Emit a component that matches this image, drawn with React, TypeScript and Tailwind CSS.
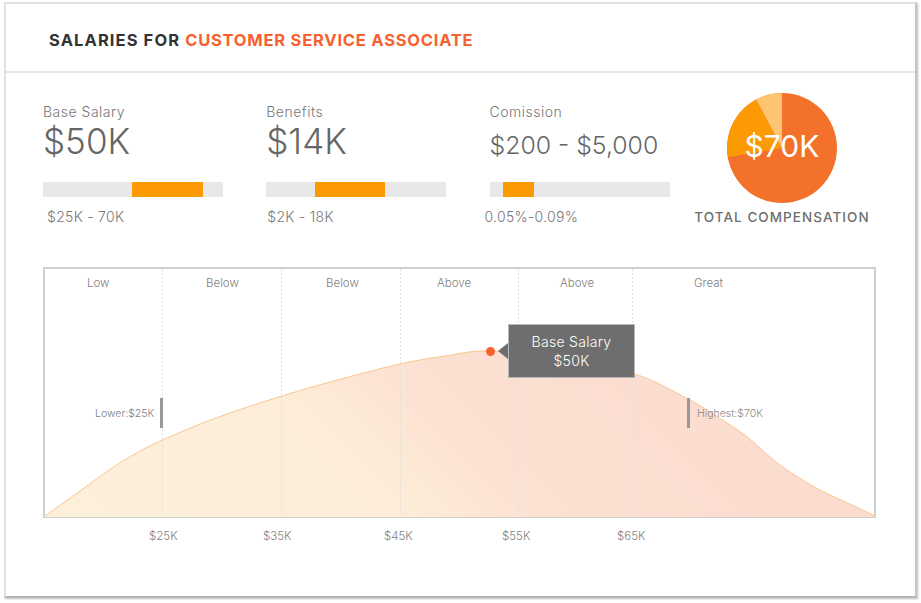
const stats = [
	{ label: 'Base Salary', value: '$50K', range: '$25K - 70K', fill: 'ml-[89px] w-[71px]', rangeStyle: 'ml-1', valueStyle: 'text-[35px] leading-[38px]' },
	{ label: 'Benefits', value: '$14K', range: '$2K - 18K', fill: 'ml-[49px] w-[70px]', rangeStyle: 'ml-px', valueStyle: 'text-[35px] leading-[38px]' },
	{ label: 'Comission', value: '$200 - $5,000', range: '0.05%-0.09%', fill: 'ml-[13px] w-[31px]', rangeStyle: '-ml-[5px]', valueStyle: 'text-[24.800px] leading-[46px]' },
];

const bands = [
	{ text: 'Low', cls: 'left-[42px]' },
	{ text: 'Below', cls: 'left-[161px]' },
	{ text: 'Below', cls: 'left-[281px]' },
	{ text: 'Above', cls: 'left-[392px]' },
	{ text: 'Above', cls: 'left-[515px]' },
	{ text: 'Great', cls: 'left-[649px]' },
];

const ticks = [
	{ text: '$25K', cls: 'left-[106px]' },
	{ text: '$35K', cls: 'left-[220px]' },
	{ text: '$45K', cls: 'left-[341px]' },
	{ text: '$55K', cls: 'left-[459px]' },
	{ text: '$65K', cls: 'left-[574px]' },
];

const grid = [117.5, 236.5, 355.5, 473.5, 587.5];

const points: [number, number][] = [
	[0, 247], [35, 222], [70, 197], [100, 179.5], [130, 165.5], [175, 147.5], [237, 127], [296, 110], [355, 95],
	[400, 87], [445, 82], [520, 90], [590, 105], [643, 130], [672, 147.5], [701, 167], [725, 188], [745, 203],
	[775, 221], [805, 235], [830, 247],
];

// catmull-rom through the sampled points
const curveD = points.reduce((d, p, i) => {
	if (i === 0) return `M${p[0]} ${p[1]}`;
	const p0 = points[Math.max(i - 2, 0)];
	const p1 = points[i - 1];
	const p3 = points[Math.min(i + 1, points.length - 1)];
	const c1 = [p1[0] + (p[0] - p0[0]) / 6, p1[1] + (p[1] - p0[1]) / 6];
	const c2 = [p[0] - (p3[0] - p1[0]) / 6, p[1] - (p3[1] - p1[1]) / 6];
	return `${d} C${c1[0]} ${c1[1]} ${c2[0]} ${c2[1]} ${p[0]} ${p[1]}`;
}, '');

const Pie = () => (
	<svg width="110" height="110" viewBox="0 0 110 110">
		<circle cx="55" cy="55" r="55" fill="#f4712b" />
		<path d="M55 55 L0.8 64.3 A55 55 0 0 1 29.3 6.4 Z" fill="#fb9a03" />
		<path d="M55 55 L29.3 6.4 A55 55 0 0 1 55 0 Z" fill="#fdc572" />
	</svg>
);

const Curve = () => (
	<svg className="absolute left-0 top-0" width="830" height="248" viewBox="0 0 830 248">
		<defs>
			<linearGradient id="area" x1="0" y1="0.6" x2="1" y2="0.4">
				<stop offset="0" stopColor="#fdf0db" />
				<stop offset="0.36" stopColor="#fcecd8" />
				<stop offset="0.47" stopColor="#fde3d3" />
				<stop offset="0.6" stopColor="#fbdfd1" />
				<stop offset="1" stopColor="#fbdccf" />
			</linearGradient>
		</defs>
		<path d={`${curveD} L830 248 L0 248 Z`} fill="url(#area)" />
		<path d={curveD} fill="none" stroke="#fcc68b" strokeWidth="1" />
		<g stroke="#e0e0e0" strokeWidth="1" strokeDasharray="2 2">
			{grid.map((x) => (
				<line key={x} x1={x} y1="0" x2={x} y2="248" />
			))}
		</g>
	</svg>
);

const App = () => {
	return (
		<div className="w-[921px] h-[603px] bg-white pl-1 pt-[2px] font-['Inter',sans-serif]">
			<div className="w-[913px] h-[596px] bg-white border-2 border-[#e2e2e2] border-r-[#c4c4c4] border-b-[#b5b5b5] shadow-[1px_1px_2px_rgba(0,0,0,0.25)]">
				{/* Header */}
				<div className="h-[69px] border-b-2 border-[#e6e6e6] pl-[43px] pt-[24px]">
					<h1 className="text-[16.500px] leading-6 font-bold tracking-[1.1px] text-[#333333]">
						SALARIES FOR <span className="tracking-[0.78px] text-[#f7612f]">CUSTOMER SERVICE ASSOCIATE</span>
					</h1>
				</div>

				{/* Stats row */}
				<div className="flex gap-[43.250px] pl-[37px] pt-[20px] h-[194px]">
					{stats.map((s) => (
						<div key={s.label} className="w-[180px] pt-[9px]">
							<div className="text-[14px] leading-5 tracking-[0.5px] text-[#777777] font-light">{s.label}</div>
							<div className={`h-[44px] font-light text-[#666666] ${s.valueStyle}`}>{s.value}</div>
							<div className="h-[15px] mt-[16px] bg-[#e8e8e8]">
								<div className={`h-full bg-[#fb9a03] ${s.fill}`} />
							</div>
							<div className={`mt-[10px] text-[14px] leading-5 tracking-[0.3px] text-[#777777] font-light ${s.rangeStyle}`}>{s.range}</div>
						</div>
					))}
					<div className="flex flex-col items-center w-[176px] -ml-[18.750px]">
						<div className="relative w-[110px] h-[110px]">
							<Pie />
							<span className="absolute inset-0 flex items-center justify-center pb-1 text-[30px] text-white">$70K</span>
						</div>
						<div className="mt-[4px] text-[13.500px] leading-5 tracking-[1.05px] font-medium text-[#6e6e6e] whitespace-nowrap">TOTAL COMPENSATION</div>
					</div>
				</div>

				{/* Chart */}
				<div className="relative ml-[37px] w-[833px] h-[251px] border-2 border-[#cfcfcf]">
					<Curve />
					{bands.map((b, i) => (
						<span key={i} className={`absolute top-[6px] text-[11.500px] leading-4 text-[#808080] font-light ${b.cls}`}>{b.text}</span>
					))}
					<span className="absolute left-[50px] top-[137px] text-[10.500px] leading-4 text-[#808080] font-light">Lower:$25K</span>
					<div className="absolute left-[115px] top-[129px] w-[3px] h-[30px] bg-[#999999]" />
					<div className="absolute left-[642px] top-[129px] w-[3px] h-[30px] bg-[#999999]" />
					<span className="absolute left-[652px] top-[137px] text-[10.500px] leading-4 text-[#8a8a8a] font-light">Highest:$70K</span>
					<div className="absolute left-[441px] top-[78px] w-[9px] h-[9px] rounded-full bg-[#f7612f]" />
					<div className="absolute left-[453px] top-[74px] w-0 h-0 border-y-[8.500px] border-y-transparent border-r-[10px] border-r-[#6e6e6e]" />
					<div className="absolute left-[463px] top-[55px] w-[127px] h-[54px] bg-[#6e6e6e] border border-[#b9b9b9] flex flex-col items-center justify-center text-[14px] leading-[19px] tracking-[0.3px] text-white font-light">
						<span>Base Salary</span>
						<span>$50K</span>
					</div>
				</div>

				{/* Axis labels */}
				<div className="relative ml-[37px] h-[26px]">
					{ticks.map((t) => (
						<span key={t.text} className={`absolute top-[10px] text-[11.500px] leading-4 text-[#808080] font-light ${t.cls}`}>{t.text}</span>
					))}
				</div>
			</div>
		</div>
	);
};

export default App;
